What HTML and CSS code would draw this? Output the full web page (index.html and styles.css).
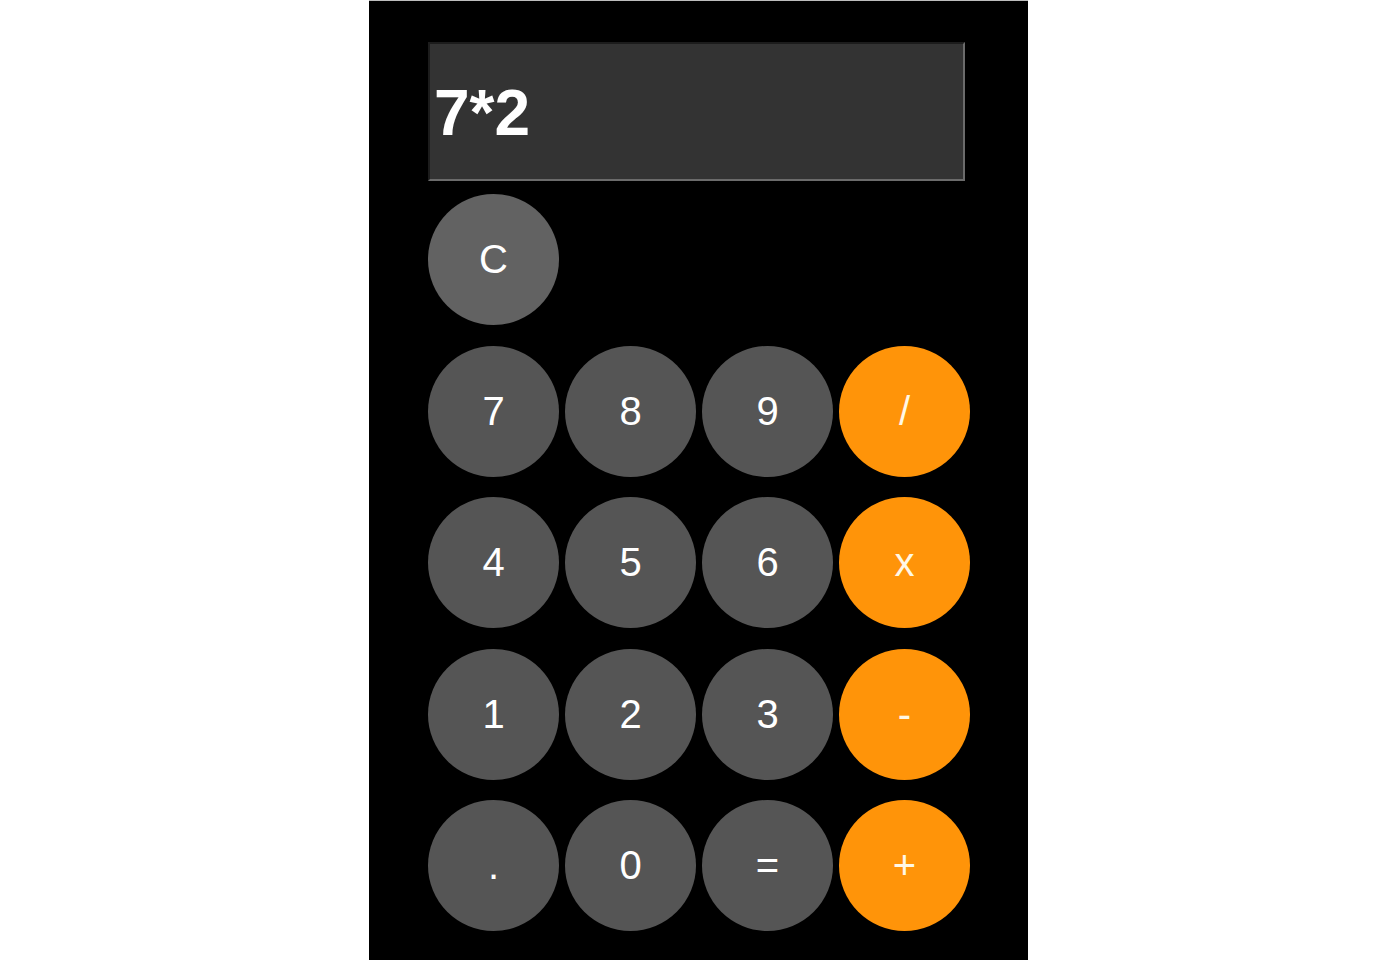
FILE: index.html
```html
<!DOCTYPE html>
<html lang="en">
<head>
<meta charset="utf-8">
<title>Calculator</title>
<link rel="stylesheet" href="styles.css">
</head>
<body>
<div class="calc">
  <div class="display">7*2</div>
  <div class="keys">
    <button class="key clear">C</button>
    <button class="key row-start">7</button>
    <button class="key">8</button>
    <button class="key">9</button>
    <button class="key op">/</button>
    <button class="key">4</button>
    <button class="key">5</button>
    <button class="key">6</button>
    <button class="key op">x</button>
    <button class="key">1</button>
    <button class="key">2</button>
    <button class="key">3</button>
    <button class="key op">-</button>
    <button class="key">.</button>
    <button class="key">0</button>
    <button class="key">=</button>
    <button class="key op">+</button>
  </div>
</div>
</body>
</html>
```

FILE: styles.css
```css
html, body {
  margin: 0;
  padding: 0;
  background: #ffffff;
  height: 100%;
}

body {
  font-family: "Liberation Sans", Arial, sans-serif;
}

.calc {
  box-sizing: border-box;
  width: 659px;
  min-height: 960px;
  margin: 0 0 0 369px;
  background: #000000;
  border-top: 1px solid #bdbdbd;
  padding: 41px 0 0 59px;
}

.display {
  box-sizing: border-box;
  width: 537px;
  height: 139px;
  background: #333333;
  border-style: solid;
  border-width: 2px;
  border-color: #1c1c1c #6b6b6b #6b6b6b #1c1c1c;
  color: #ffffff;
  font-weight: bold;
  font-size: 64px;
  display: flex;
  align-items: center;
  padding-left: 4px;
  padding-top: 2px;
}

.keys {
  margin-top: 13px;
  display: grid;
  grid-template-columns: repeat(4, 131px);
  grid-auto-rows: 131px;
  column-gap: 6px;
  row-gap: 20.5px;
}

.key {
  width: 131px;
  height: 131px;
  border: none;
  border-radius: 50%;
  background: #555555;
  color: #ffffff;
  font-family: "Liberation Sans", Arial, sans-serif;
  font-size: 40px;
  padding: 0;
  display: flex;
  align-items: center;
  justify-content: center;
}

.clear {
  background: #626262;
}

.row-start {
  grid-column: 1;
}

.op {
  background: #ff9409;
  color: #fff8e6;
}
```
